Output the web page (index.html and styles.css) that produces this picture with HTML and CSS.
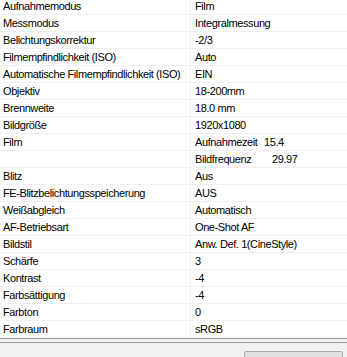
FILE: index.html
```html
<!DOCTYPE html>
<html lang="de">
<head>
<meta charset="utf-8">
<link rel="stylesheet" href="styles.css">
</head>
<body>
<div class="window">
  <div class="list">
    <div class="rows">
      <div class="row"><div class="k">Aufnahmemodus</div><div class="v">Film</div></div>
      <div class="row"><div class="k">Messmodus</div><div class="v">Integralmessung</div></div>
      <div class="row"><div class="k">Belichtungskorrektur</div><div class="v">-2/3</div></div>
      <div class="row"><div class="k">Filmempfindlichkeit (ISO)</div><div class="v">Auto</div></div>
      <div class="row"><div class="k">Automatische Filmempfindlichkeit (ISO)</div><div class="v">EIN</div></div>
      <div class="row"><div class="k">Objektiv</div><div class="v">18-200mm</div></div>
      <div class="row"><div class="k">Brennweite</div><div class="v">18.0 mm</div></div>
      <div class="row"><div class="k">Bildgröße</div><div class="v">1920x1080</div></div>
      <div class="row"><div class="k">Film</div><div class="v"><span class="sub1">Aufnahmezeit</span><span>15.4</span></div></div>
      <div class="row"><div class="k"></div><div class="v"><span class="sub2">Bildfrequenz</span><span>29.97</span></div></div>
      <div class="row"><div class="k">Blitz</div><div class="v">Aus</div></div>
      <div class="row"><div class="k">FE-Blitzbelichtungsspeicherung</div><div class="v">AUS</div></div>
      <div class="row"><div class="k">Weißabgleich</div><div class="v">Automatisch</div></div>
      <div class="row"><div class="k">AF-Betriebsart</div><div class="v">One-Shot AF</div></div>
      <div class="row"><div class="k">Bildstil</div><div class="v">Anw. Def. 1(CineStyle)</div></div>
      <div class="row"><div class="k">Schärfe</div><div class="v">3</div></div>
      <div class="row"><div class="k">Kontrast</div><div class="v">-4</div></div>
      <div class="row"><div class="k">Farbsättigung</div><div class="v">-4</div></div>
      <div class="row"><div class="k">Farbton</div><div class="v">0</div></div>
      <div class="row"><div class="k">Farbraum</div><div class="v">sRGB</div></div>
    </div>
  </div>
  <div class="sep"></div>
  <div class="footer">
    <button class="btn">Schließen</button>
  </div>
</div>
</body>
</html>
```
FILE: styles.css
```css
html, body {
  margin: 0;
  padding: 0;
  background: #f0f0f0;
}
.window {
  width: 347px;
  height: 357px;
  overflow: hidden;
  font-family: "Liberation Sans", Arial, sans-serif;
  font-size: 11px;
  letter-spacing: -0.4px;
  color: #000;
}
.list {
  height: 338px;
  overflow: hidden;
  background: #fff;
  border-bottom: 1px solid #a0a0a0;
}
.rows {
  margin-top: -2px;
}
.row {
  display: grid;
  grid-template-columns: 191px 1fr;
  height: 16px;
  line-height: 16px;
  border-bottom: 1px solid #f0f0f0;
  white-space: nowrap;
}
.k {
  padding-left: 3px;
  overflow: hidden;
  border-right: 1px solid #f0f0f0;
}
.v {
  padding-left: 4px;
  display: flex;
}
.sub1 { width: 69px; flex: none; }
.sub2 { width: 77px; flex: none; }
.sep {
  height: 3px;
  background: #f0f0f0;
  border-bottom: 1px solid #a0a0a0;
}
.footer {
  display: flex;
  justify-content: flex-end;
  padding: 8px 4px 0 0;
}
.btn {
  width: 99px;
  height: 23px;
  border: 1px solid #adadad;
  border-radius: 2px;
  background: #e1e1e1;
  font-family: "Liberation Sans", Arial, sans-serif;
  font-size: 11px;
  color: #000;
  padding: 0;
}
```
